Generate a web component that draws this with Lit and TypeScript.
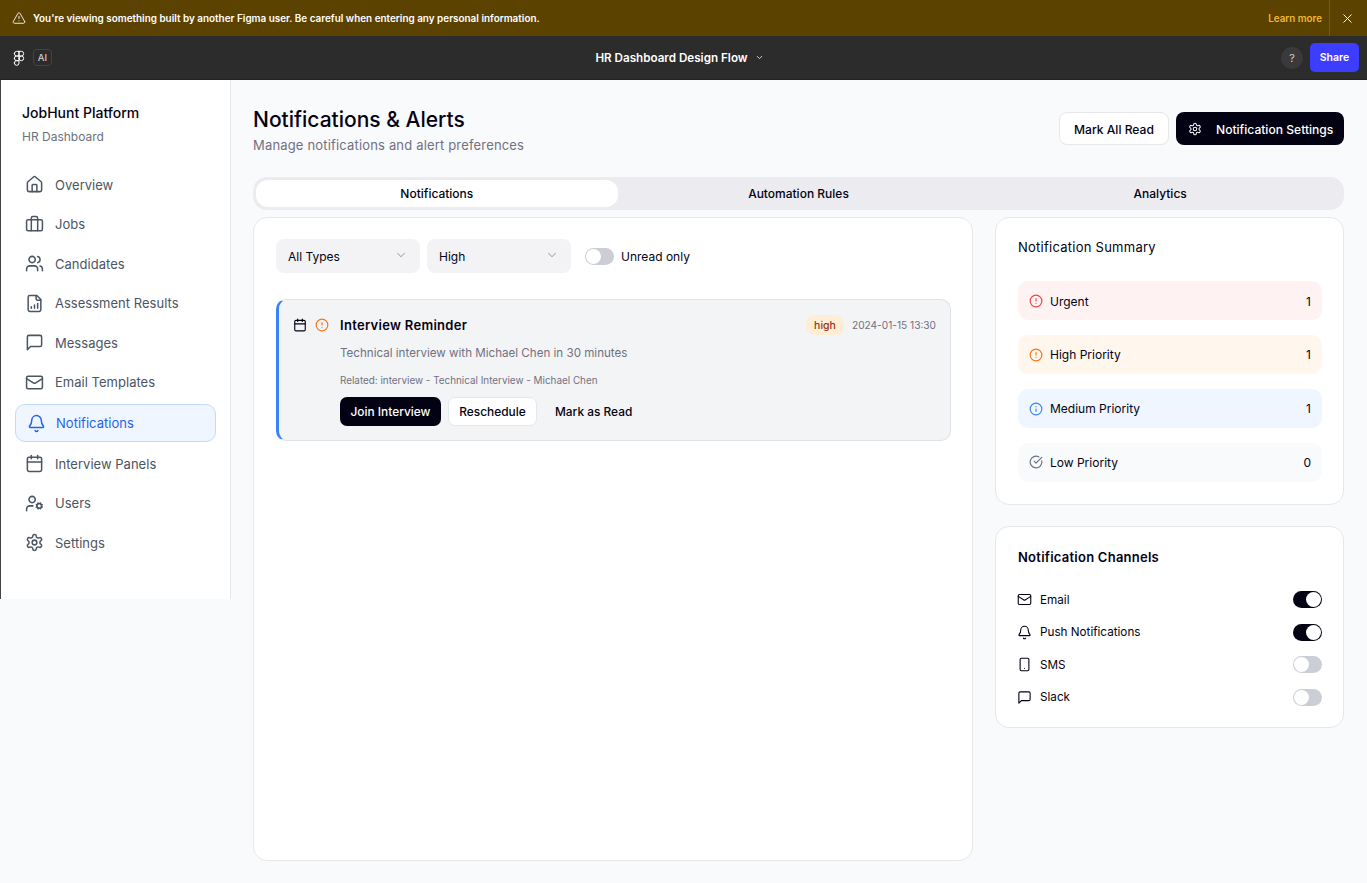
import { LitElement, html, css, svg } from "lit";
import { customElement } from "lit/decorators.js";

const P: Record<string, unknown> = {
  house: svg`<path d="M15 21v-8a1 1 0 0 0-1-1h-4a1 1 0 0 0-1 1v8"/><path d="M3 10a2 2 0 0 1 .709-1.528l7-5.999a2 2 0 0 1 2.582 0l7 5.999A2 2 0 0 1 21 10v9a2 2 0 0 1-2 2H5a2 2 0 0 1-2-2z"/>`,
  briefcase: svg`<path d="M16 20V4a2 2 0 0 0-2-2h-4a2 2 0 0 0-2 2v16"/><rect width="20" height="14" x="2" y="6" rx="2"/>`,
  users: svg`<path d="M16 21v-2a4 4 0 0 0-4-4H6a4 4 0 0 0-4 4v2"/><circle cx="9" cy="7" r="4"/><path d="M22 21v-2a4 4 0 0 0-3-3.87"/><path d="M16 3.13a4 4 0 0 1 0 7.75"/>`,
  chart: svg`<path d="M15 2H6a2 2 0 0 0-2 2v16a2 2 0 0 0 2 2h12a2 2 0 0 0 2-2V7Z"/><path d="M14 2v4a2 2 0 0 0 2 2h4"/><path d="M8 18v-2"/><path d="M12 18v-4"/><path d="M16 18v-6"/>`,
  message: svg`<path d="M21 15a2 2 0 0 1-2 2H7l-4 4V5a2 2 0 0 1 2-2h14a2 2 0 0 1 2 2z"/>`,
  mail: svg`<rect width="20" height="16" x="2" y="4" rx="2"/><path d="m22 7-8.97 5.7a1.94 1.94 0 0 1-2.06 0L2 7"/>`,
  bell: svg`<path d="M10.268 21a2 2 0 0 0 3.464 0"/><path d="M3.262 15.326A1 1 0 0 0 4 17h16a1 1 0 0 0 .74-1.673C19.41 13.956 18 12.499 18 8A6 6 0 0 0 6 8c0 4.499-1.411 5.956-2.738 7.326"/>`,
  calendar: svg`<path d="M8 2v4"/><path d="M16 2v4"/><rect width="18" height="18" x="3" y="4" rx="2"/><path d="M3 10h18"/>`,
  usercog: svg`<circle cx="18" cy="15" r="3"/><circle cx="9" cy="7" r="4"/><path d="M10 15H6a4 4 0 0 0-4 4v2"/><path d="m21.7 16.4-.9-.3"/><path d="m15.2 13.9-.9-.3"/><path d="m16.6 18.7.3-.9"/><path d="m19.1 12.2.3-.9"/><path d="m19.6 18.7-.4-1"/><path d="m16.8 12.3-.4-1"/><path d="m14.3 16.6 1-.4"/><path d="m20.7 13.8 1-.4"/>`,
  settings: svg`<path d="M12.22 2h-.44a2 2 0 0 0-2 2v.18a2 2 0 0 1-1 1.73l-.43.25a2 2 0 0 1-2 0l-.15-.08a2 2 0 0 0-2.73.73l-.22.38a2 2 0 0 0 .73 2.73l.15.1a2 2 0 0 1 1 1.72v.51a2 2 0 0 1-1 1.74l-.15.09a2 2 0 0 0-.73 2.73l.22.38a2 2 0 0 0 2.73.73l.15-.08a2 2 0 0 1 2 0l.43.25a2 2 0 0 1 1 1.73V20a2 2 0 0 0 2 2h.44a2 2 0 0 0 2-2v-.18a2 2 0 0 1 1-1.73l.43-.25a2 2 0 0 1 2 0l.15.08a2 2 0 0 0 2.73-.73l.22-.39a2 2 0 0 0-.73-2.73l-.15-.08a2 2 0 0 1-1-1.74v-.5a2 2 0 0 1 1-1.74l.15-.09a2 2 0 0 0 .73-2.73l-.22-.38a2 2 0 0 0-2.73-.73l-.15.08a2 2 0 0 1-2 0l-.43-.25a2 2 0 0 1-1-1.73V4a2 2 0 0 0-2-2z"/><circle cx="12" cy="12" r="3"/>`,
  alert: svg`<circle cx="12" cy="12" r="10"/><line x1="12" x2="12" y1="8" y2="12"/><line x1="12" x2="12.01" y1="16" y2="16"/>`,
  info: svg`<circle cx="12" cy="12" r="10"/><path d="M12 16v-4"/><path d="M12 8h.01"/>`,
  check: svg`<path d="M21.801 10A10 10 0 1 1 17 3.335"/><path d="m9 11 3 3L22 4"/>`,
  phone: svg`<rect width="14" height="20" x="5" y="2" rx="2"/><path d="M12 18h.01"/>`,
  triangle: svg`<path d="m21.73 18-8-14a2 2 0 0 0-3.48 0l-8 14A2 2 0 0 0 4 21h16a2 2 0 0 0 1.73-3"/><path d="M12 9v4"/><path d="M12 17h.01"/>`,
  x: svg`<path d="M18 6 6 18"/><path d="m6 6 12 12"/>`,
  chevron: svg`<path d="m6 9 6 6 6-6"/>`,
  figma: svg`<path d="M5 5.5A3.5 3.5 0 0 1 8.5 2H12v7H8.5A3.5 3.5 0 0 1 5 5.5z"/><path d="M12 2h3.5a3.5 3.5 0 1 1 0 7H12V2z"/><path d="M12 12.5a3.5 3.5 0 1 1 7 0 3.5 3.5 0 1 1-7 0z"/><path d="M5 19.5A3.5 3.5 0 0 1 8.5 16H12v3.5a3.5 3.5 0 1 1-7 0z"/><path d="M5 12.5A3.5 3.5 0 0 1 8.5 9H12v7H8.5A3.5 3.5 0 0 1 5 12.5z"/>`,
};

const icon = (name: string, size: number, color = "currentColor", sw = 2) => html`<svg
  class="ic" width=${size} height=${size} viewBox="0 0 24 24" fill="none" stroke=${color}
  stroke-width=${sw} stroke-linecap="round" stroke-linejoin="round">${P[name]}</svg>`;

const NAV = [
  ["house", "Overview"], ["briefcase", "Jobs"], ["users", "Candidates"], ["chart", "Assessment Results"],
  ["message", "Messages"], ["mail", "Email Templates"], ["bell", "Notifications"], ["calendar", "Interview Panels"],
  ["usercog", "Users"], ["settings", "Settings"],
];
const SUMMARY = [
  ["alert", "#ef4444", "Urgent", "1", "red"], ["alert", "#f97316", "High Priority", "1", "orange"],
  ["info", "#3b82f6", "Medium Priority", "1", "blue"], ["check", "#6b7280", "Low Priority", "0", "gray"],
];
const CHANNELS: [string, string, boolean][] = [
  ["mail", "Email", true], ["bell", "Push Notifications", true], ["phone", "SMS", false], ["message", "Slack", false],
];

@customElement("app-root")
export class AppRoot extends LitElement {
  static styles = css`
    :host { display: block; width: 1367px; height: 883px; overflow: hidden; background: #f9fafb;
      font-family: Inter, "Noto Sans", sans-serif; color: #030213; font-size: 14px; }
    * { box-sizing: border-box; }
    .ic { display: block; flex: none; }
    .banner { height: 36px; background: #5c4200; display: flex; align-items: center; color: #fff; padding-left: 12px; }
    .banner-text { margin-left: 7px; font-size: 9.92px; font-weight: 600; flex: 1; }
    .learn { color: #f0b72f; font-size: 9.8px; font-weight: 600; padding-right: 7px; }
    .close { width: 38px; height: 36px; border-left: 1px solid #74591a; display: flex; align-items: center; justify-content: center; padding-right: 2px; }
    .bar { height: 44px; background: #2c2c2c; border-bottom: 1px solid #222; display: grid; grid-template-columns: 1fr auto 1fr; align-items: center; color: #fff; padding: 0 8px 0 11px; }
    .bar-l { display: flex; align-items: center; gap: 6px; }
    .ai { width: 19px; height: 17px; border: 1px solid #444; border-radius: 4px; font-size: 9.5px; font-weight: 500; color: #ccc; display: flex; align-items: center; justify-content: center; }
    .bar-c { display: flex; align-items: center; gap: 7px; font-size: 11.65px; font-weight: 600; margin-right: 11px; }
    .bar-r { display: flex; justify-content: flex-end; align-items: center; gap: 7px; }
    .help { width: 22px; height: 22px; border-radius: 50%; background: #3a3a3a; color: #ccc; font-size: 11px; display: flex; align-items: center; justify-content: center; }
    .share { width: 49px; height: 29px; border-radius: 5px; background: #3d3dff; font-size: 10.5px; font-weight: 600; display: flex; align-items: center; justify-content: center; }
    .body { display: flex; align-items: flex-start; height: 803px; }
    .side { width: 231px; height: 519px; flex: none; background: #fff; border-left: 1px solid #444; border-right: 1px solid #e5e7eb; padding: 24px 14px 0; }
    .brand { padding-left: 7px; }
    .brand-t { font-size: 14px; font-weight: 500; line-height: 18px; }
    .brand-s { font-size: 12px; line-height: 18px; margin-top: 6px; color: #6b7280; }
    nav { margin-top: 21px; display: flex; flex-direction: column; gap: 4px; }
    .item { height: 35.5px; display: flex; align-items: center; gap: 11px; padding-left: 10px; color: #4b5563; font-size: 13px; letter-spacing: .02px; border-radius: 10px; }
    .item.on { height: 38px; gap: 10px; padding-left: 11px; background: #eff6ff; border: 1px solid #bfdbfe; color: #2563eb; }
    main { flex: 1; padding: 24px 23px 0 22px; }
    .head { display: flex; justify-content: space-between; align-items: center; height: 51px; }
    h1 { margin: 0; font-size: 21px; line-height: 31px; font-weight: 500; }
    .sub { font-size: 13px; line-height: 20px; color: #717182; letter-spacing: .17px; }
    .acts { display: flex; gap: 7px; margin-bottom: 2px; }
    .btn { height: 33px; border-radius: 8px; font-size: 12.1px; font-weight: 500; display: flex; align-items: center; padding-top: 1px; white-space: nowrap; }
    .outline { background: #fff; border: 1px solid #e5e7eb; padding-left: 14px; width: 110px; }
    .dark { background: #030213; color: #fff; padding-left: 12px; gap: 14px; width: 168px; }
    .tabs { margin-top: 22px; height: 33px; border-radius: 14px; background: #ececf0; padding: 3px; display: grid; grid-template-columns: repeat(3, 1fr); }
    .tab { display: flex; align-items: center; justify-content: center; font-size: 12px; font-weight: 500; border-radius: 12px; }
    .tab.on { background: #fff; }
    .grid { margin-top: 7px; display: grid; grid-template-columns: 720px 349px; gap: 22px; }
    .card { background: #fff; border: 1px solid #e5e7eb; border-radius: 14px; }
    .left { height: 644px; padding: 21px 21px 0 22px; }
    .filters { display: flex; align-items: center; height: 34px; gap: 7px; }
    .select { width: 144px; height: 34px; border-radius: 8px; background: #f3f3f5; display: flex; align-items: center; justify-content: space-between; padding: 0 12px; font-size: 12px; }
    .select .ic { margin-top: -3px; }
    .sw { width: 29px; height: 17px; border-radius: 9px; background: #cbced4; display: flex; align-items: center; padding: 1px; }
    .sw.on { background: #030213; justify-content: flex-end; }
    .sw i { display: block; width: 15px; height: 15px; border-radius: 50%; background: #fff; }
    .unread { display: flex; align-items: center; gap: 7px; margin-left: 7px; font-size: 12px; }
    .notif { margin-top: 26px; height: 142px; background: #f3f4f6; border: 1px solid #e0e2e6; border-left: 3px solid #3b82f6; border-radius: 10px; padding: 15px 14px 0 14px; display: flex; }
    .n-ic { display: flex; gap: 8px; padding-top: 3px; width: 47px; flex: none; }
    .n-body { flex: 1; }
    .n-top { display: flex; align-items: center; justify-content: space-between; height: 20px; }
    .n-t { font-size: 13px; font-weight: 600; letter-spacing: .3px; }
    .n-meta { display: flex; align-items: center; gap: 8px; }
    .badge { width: 38px; height: 20px; border-radius: 8px; background: #ffedd5; color: #9a3412; font-size: 10.5px; font-weight: 500; display: flex; align-items: center; justify-content: center; }
    .date { font-size: 10.15px; color: #717182; }
    .desc { font-size: 11.6px; line-height: 18px; margin-top: 9px; color: #717182; }
    .rel { font-size: 9.9px; line-height: 14px; margin-top: 11px; color: #717182; }
    .n-acts { display: flex; align-items: center; gap: 7px; margin-top: 10px; }
    .sm { height: 29px; border-radius: 7px; font-size: 11.9px; font-weight: 500; display: flex; align-items: center; justify-content: center; }
    .sm.a { width: 101px; background: #030213; color: #fff; }
    .sm.b { width: 89px; background: #fff; border: 1px solid #e5e7eb; }
    .sm.c { margin-left: 11px; }
    .col { display: flex; flex-direction: column; gap: 21px; }
    .summary { height: 288px; padding: 21px 21px 0 22px; }
    .c-t { font-size: 13px; line-height: 16px; letter-spacing: .25px; }
    .rows { margin-top: 26.4px; display: flex; flex-direction: column; gap: 14.75px; }
    .row { height: 39px; border-radius: 10px; display: flex; align-items: center; gap: 7px; padding: .6px 11px 0; font-size: 12px; }
    .row span:first-of-type { flex: 1; }
    .red { background: #fef2f2; } .orange { background: #fff7ed; } .blue { background: #eff6ff; } .gray { background: #f9fafb; }
    .channels { height: 202px; padding: 22px 21px 0 22px; }
    .channels .c-t { font-weight: 600; line-height: 17px; }
    .ch { margin-top: 25.4px; display: flex; flex-direction: column; gap: 15.5px; }
    .ch-row { height: 17px; display: flex; align-items: center; gap: 8px; font-size: 11.7px; }
    .ch-row .ic { margin-left: -1px; }
    .ch-row span { flex: 1; }
  `;

  render() {
    return html`
      <div class="banner">
        ${icon("triangle", 14, "#fff", 1.5)}
        <div class="banner-text">You're viewing something built by another Figma user. Be careful when entering any personal information.</div>
        <div class="learn">Learn more</div>
        <div class="close">${icon("x", 15, "#fff", 1.5)}</div>
      </div>
      <div class="bar">
        <div class="bar-l">${icon("figma", 16, "#fff", 1.5)}<div class="ai">AI</div></div>
        <div class="bar-c">HR Dashboard Design Flow ${icon("chevron", 9, "#ddd", 2.5)}</div>
        <div class="bar-r"><div class="help">?</div><div class="share">Share</div></div>
      </div>
      <div class="body">
        <aside class="side">
          <div class="brand"><div class="brand-t">JobHunt Platform</div><div class="brand-s">HR Dashboard</div></div>
          <nav>${NAV.map(([i, t]) => html`<div class="item ${t === "Notifications" ? "on" : ""}">${icon(i, 19, "currentColor", 1.9)}<span>${t}</span></div>`)}</nav>
        </aside>
        <main>
          <div class="head">
            <div><h1>Notifications &amp; Alerts</h1><div class="sub">Manage notifications and alert preferences</div></div>
            <div class="acts">
              <div class="btn outline">Mark All Read</div>
              <div class="btn dark">${icon("settings", 14, "#fff", 1.75)}Notification Settings</div>
            </div>
          </div>
          <div class="tabs"><div class="tab on">Notifications</div><div class="tab">Automation Rules</div><div class="tab">Analytics</div></div>
          <div class="grid">
            <section class="card left">
              <div class="filters">
                <div class="select">All Types ${icon("chevron", 14, "#a8acb3", 1.75)}</div>
                <div class="select">High ${icon("chevron", 14, "#a8acb3", 1.75)}</div>
                <div class="unread"><div class="sw"><i></i></div>Unread only</div>
              </div>
              <article class="notif">
                <div class="n-ic">${icon("calendar", 14, "#030213", 1.9)}${icon("alert", 14, "#f97316", 2)}</div>
                <div class="n-body">
                  <div class="n-top">
                    <div class="n-t">Interview Reminder</div>
                    <div class="n-meta"><div class="badge">high</div><div class="date">2024-01-15 13:30</div></div>
                  </div>
                  <div class="desc">Technical interview with Michael Chen in 30 minutes</div>
                  <div class="rel">Related: interview - Technical Interview - Michael Chen</div>
                  <div class="n-acts"><div class="sm a">Join Interview</div><div class="sm b">Reschedule</div><div class="sm c">Mark as Read</div></div>
                </div>
              </article>
            </section>
            <div class="col">
              <section class="card summary">
                <div class="c-t">Notification Summary</div>
                <div class="rows">
                  ${SUMMARY.map(([i, c, t, n, k]) => html`<div class="row ${k}">${icon(i, 14, c, 2)}<span>${t}</span><span>${n}</span></div>`)}
                </div>
              </section>
              <section class="card channels">
                <div class="c-t">Notification Channels</div>
                <div class="ch">
                  ${CHANNELS.map(([i, t, on]) => html`<div class="ch-row">${icon(i, 15, "#030213", 1.75)}<span>${t}</span><div class="sw ${on ? "on" : ""}"><i></i></div></div>`)}
                </div>
              </section>
            </div>
          </div>
        </main>
      </div>
    `;
  }
}
